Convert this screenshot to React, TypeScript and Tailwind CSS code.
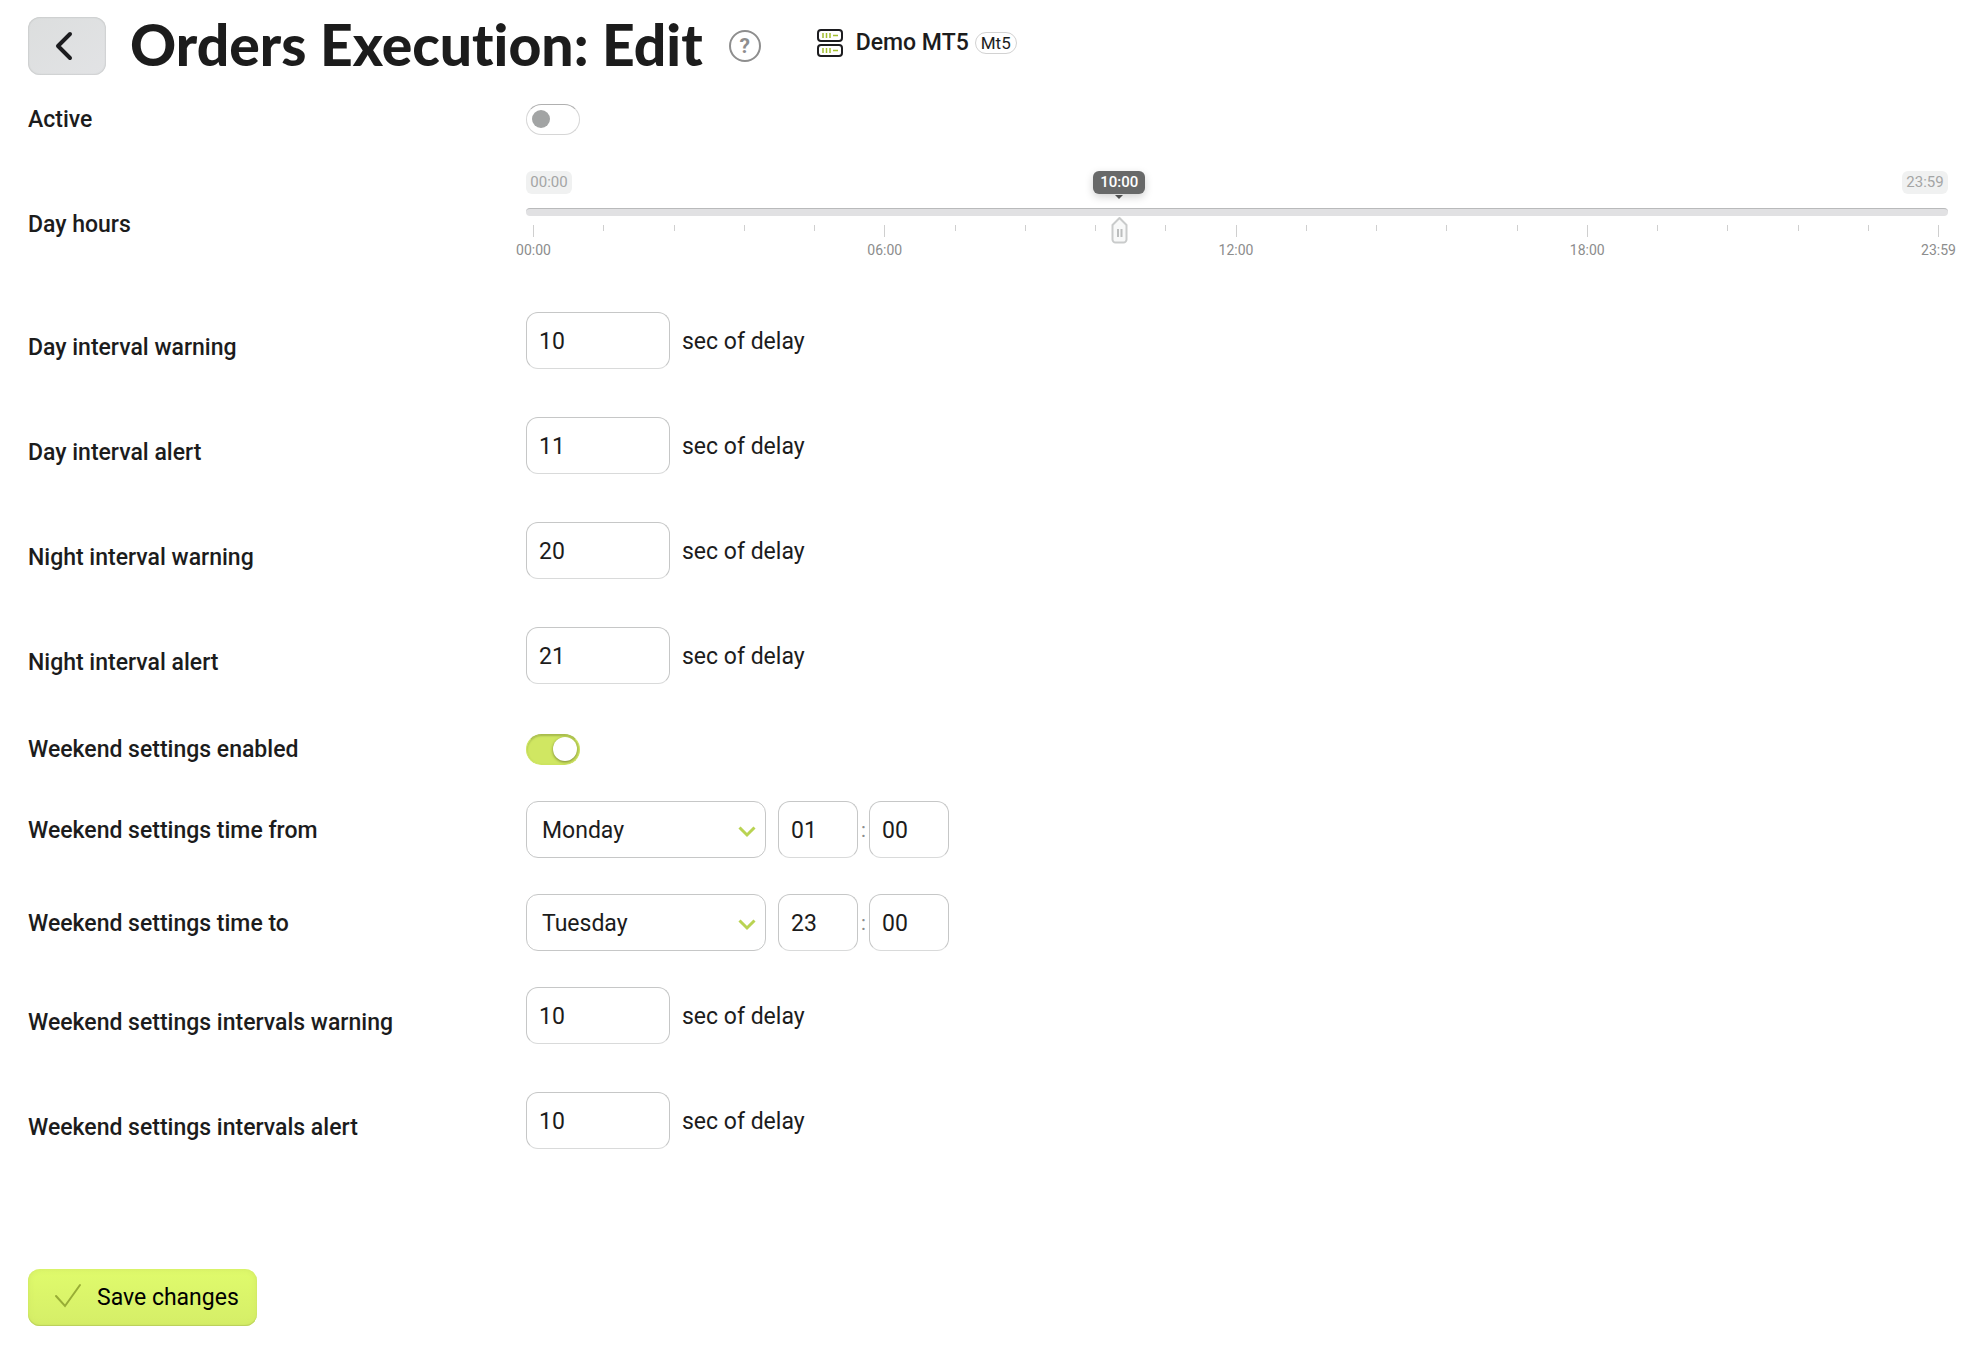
import React, { useState } from 'react';

const DAYS = ['Monday', 'Tuesday', 'Wednesday', 'Thursday', 'Friday', 'Saturday', 'Sunday'];
const DAY_MINUTES = 1439;
const TICKS = Array.from({ length: 21 }, (_, i) => i);
const TICK_LABELS: Record<number, string> = { 0: '00:00', 5: '06:00', 10: '12:00', 15: '18:00', 20: '23:59' };

const labelClass = 'pt-0.5 font-medium';
const fieldClass =
  'h-[57px] rounded-xl border border-[#c6c7c7] border-b-[#d9dada] bg-white pl-3 pt-0.5 text-[23px] text-[#1c1c1c] outline-none focus:border-[#b9d24c]';

const formatTime = (minutes: number) =>
  `${String(Math.floor(minutes / 60)).padStart(2, '0')}:${String(minutes % 60).padStart(2, '0')}`;

const App: React.FC = () => {
  return (
    <main className="min-h-screen bg-white pl-7 pr-[37px] pb-5 font-['Roboto',sans-serif] text-[23px] leading-7 text-[#1c1c1c]">
      <Header />
      <form onSubmit={(e) => e.preventDefault()}>
        <div className="mb-1.5 grid h-[57px] grid-cols-[498px_1fr] items-center">
          <label htmlFor="active" className="font-medium">Active</label>
          <Toggle id="active" />
        </div>

        <DayHours />

        <IntervalRow id="day-warning" label="Day interval warning" value="10" />
        <IntervalRow id="day-alert" label="Day interval alert" value="11" />
        <IntervalRow id="night-warning" label="Night interval warning" value="20" />
        <IntervalRow id="night-alert" label="Night interval alert" value="21" />

        <div className="grid h-[69px] grid-cols-[498px_1fr] items-center pt-0.5">
          <label htmlFor="weekend" className="font-medium">Weekend settings enabled</label>
          <Toggle id="weekend" on />
        </div>

        <TimeRow id="from" label="Weekend settings time from" day="Monday" hour="01" minute="00" />
        <TimeRow id="to" label="Weekend settings time to" day="Tuesday" hour="23" minute="00" />

        <IntervalRow id="weekend-warning" label="Weekend settings intervals warning" value="10" />
        <IntervalRow id="weekend-alert" label="Weekend settings intervals alert" value="10" />

        <button
          type="submit"
          className="mt-[90px] flex h-[57px] items-center gap-[14px] rounded-xl bg-linear-to-b from-[#e0fb6c] to-[#d5ee68] pl-[26px] pr-[18px] text-black shadow-[inset_0_-1px_1px_#b9cf5a,inset_0_0_6px_#cfe763]"
        >
          <svg width="29" height="26" viewBox="0 0 29 26" fill="none" stroke="#98ad35" strokeWidth="2" strokeLinecap="round" className="mb-1">
            <path d="M2 13l9 10L26 2" />
          </svg>
          Save changes
        </button>
      </form>
    </main>
  );
};

const Header = () => (
  <header className="flex h-[91px] items-center">
    <button
      type="button"
      aria-label="Back"
      className="flex h-[58px] w-[78px] items-center justify-center rounded-xl bg-linear-to-br from-[#dcdede] to-[#e2e3e5] pr-1.5 shadow-[inset_0_0_2px_#a9abab]"
    >
      <svg width="18" height="30" viewBox="0 0 18 30" fill="none" stroke="#1c1c1f" strokeWidth="4" strokeLinecap="round" strokeLinejoin="round">
        <path d="M15 3L3 15l12 12" />
      </svg>
    </button>
    <h1 className="ml-6 whitespace-nowrap pb-1 font-['Lato',sans-serif] text-[57px] font-black leading-[60px] [font-variant-ligatures:none]">Orders Execution: Edit</h1>
    <button
      type="button"
      aria-label="Help"
      className="ml-[26px] flex size-8 items-center justify-center rounded-full border-2 border-[#8e8e8e] text-[21px] font-bold text-[#8e8e8e]"
    >
      ?
    </button>
    <div className="ml-14 mb-1.5 flex items-center">
      <ServerIcon />
      <span className="ml-[13px] whitespace-nowrap font-medium">Demo MT5</span>
      <span className="ml-1.5 flex h-[22px] items-center rounded-full border border-[#d2d2d2] px-[5px] text-[17px]">Mt5</span>
    </div>
  </header>
);

const ServerIcon = () => (
  <svg width="26" height="28" viewBox="0 0 26 28" fill="none" strokeWidth="2">
    <rect x="1" y="1" width="24" height="11" rx="3" stroke="#1c1c1f" />
    <rect x="1" y="16" width="24" height="11" rx="3" stroke="#1c1c1f" />
    <path d="M6 4v5M9.500 4v5M13 4v5M16 6.500h5M6 19v5M9.500 19v5M13 19v5M16 21.500h5" stroke="#a3bf2f" strokeWidth="1.500" />
  </svg>
);

const Toggle = ({ id, on = false }: { id: string; on?: boolean }) => (
  <span className="relative block h-[31px] w-[54px]">
    <input
      id={id}
      type="checkbox"
      role="switch"
      defaultChecked={on}
      className="peer block h-full w-full cursor-pointer appearance-none rounded-full border border-[#d6d6d6] border-t-[#b0b0b0] bg-white checked:border-[#cde45f] checked:border-t-[#a9bd4c] checked:bg-[#d0e762] checked:shadow-[inset_0_1px_2px_#a3b74b]"
    />
    <span className="pointer-events-none absolute left-1.5 top-1.5 size-[18px] rounded-full bg-[#a2a4a4] peer-checked:left-[27px] peer-checked:top-[3px] peer-checked:size-6 peer-checked:bg-white peer-checked:shadow-[0_1px_3px_#75832f]" />
  </span>
);

const DayHours = () => {
  const [minutes, setMinutes] = useState(600);
  const left = `${(minutes / DAY_MINUTES) * 100}%`;

  return (
    <div className="grid h-[140px] grid-cols-[498px_1fr] items-center">
      <label htmlFor="day-hours" className={labelClass}>Day hours</label>
      <div className="relative h-full pt-[17px] text-[15px] leading-[23px]">
        <div className="flex justify-between text-[#a4a5a5]">
          <span className="w-[46px] rounded-md bg-[#f0f1f1] text-center">00:00</span>
          <span className="w-[46px] rounded-md bg-[#f0f1f1] text-center">23:59</span>
        </div>
        <div className="mt-[14px] h-2 rounded-full border-t border-[#b9babb] bg-[#e1e1e3]" />

        {/* Scale */}
        <div className="ml-[7px] mr-[9px] mt-[9px] flex justify-between text-sm text-[#8c8d8d]">
          {TICKS.map((i) => (
            <div key={i} className="flex w-px flex-col items-center">
              <span className={`w-px shrink-0 bg-[#cfcfcf] ${i % 5 === 0 ? 'h-3' : 'h-1.5'}`} />
              {i % 5 === 0 && <span className="mt-1 leading-[18px]">{TICK_LABELS[i]}</span>}
            </div>
          ))}
        </div>

        {/* Handle and its tooltip */}
        <div className="pointer-events-none absolute inset-y-0 left-[7px] right-[9px]">
          <div className="absolute top-[17px] flex w-[52px] -translate-x-1/2 flex-col items-center" style={{ left }}>
            <span className="w-full rounded-md bg-[#686969] text-center font-medium text-white shadow-[0_3px_8px_#0000002e]">
              {formatTime(minutes)}
            </span>
            <svg width="8" height="4" viewBox="0 0 8 4" className="mt-px">
              <path d="M0 0h8L4 4z" fill="#4f5050" />
            </svg>
            <svg width="17" height="28" viewBox="0 0 17 28" className="mt-[17px]">
              <path d="M8.500 2L15.500 9v14.500a3 3 0 0 1-3 3h-8a3 3 0 0 1-3-3V9z" fill="#f8f9f9" stroke="#c9cbcb" strokeWidth="2" strokeLinejoin="round" />
              <path d="M7 13v8M10.500 13v8" stroke="#bcbebe" strokeWidth="2" />
            </svg>
          </div>
        </div>
        <input
          id="day-hours"
          type="range"
          min={0}
          max={DAY_MINUTES}
          step={1}
          value={minutes}
          onChange={(e) => setMinutes(Number(e.target.value))}
          className="absolute inset-x-0 top-[50px] h-10 w-full cursor-pointer opacity-0"
        />
      </div>
    </div>
  );
};

const IntervalRow = ({ id, label, value }: { id: string; label: string; value: string }) => (
  <div className="grid grid-cols-[498px_1fr] items-center py-[18px]">
    <label htmlFor={id} className={labelClass}>{label}</label>
    <div className="flex items-center gap-3 pb-3">
      <input id={id} type="text" inputMode="numeric" defaultValue={value} className={`w-[144px] ${fieldClass}`} />
      <span className="pt-0.5">sec of delay</span>
    </div>
  </div>
);

type TimeRowProps = { id: string; label: string; day: string; hour: string; minute: string };

const TimeRow = ({ id, label, day, hour, minute }: TimeRowProps) => (
  <div className="grid grid-cols-[498px_1fr] items-center py-[18px]">
    <label htmlFor={id} className={labelClass}>{label}</label>
    <div className="flex items-center">
      <div className="relative">
        <select
          id={id}
          defaultValue={day}
          className="block h-[57px] w-[240px] appearance-none rounded-xl border border-[#c6c7c7] bg-white pl-[15px] pt-0.5 text-[23px] text-[#1c1c1c] outline-none"
        >
          {DAYS.map((d) => (
            <option key={d}>{d}</option>
          ))}
        </select>
        <svg width="18" height="12" viewBox="0 0 18 12" fill="none" stroke="#b9d352" strokeWidth="3" className="pointer-events-none absolute right-2.5 top-[25px]">
          <path d="M1.500 1.500L9 9l7.500-7.500" />
        </svg>
      </div>
      <input aria-label={`${label}, hours`} type="text" defaultValue={hour} className={`ml-3 w-20 ${fieldClass}`} />
      <span className="w-[11px] text-center text-xl text-[#8c8d8d]">:</span>
      <input aria-label={`${label}, minutes`} type="text" defaultValue={minute} className={`w-20 ${fieldClass}`} />
    </div>
  </div>
);

export default App;
